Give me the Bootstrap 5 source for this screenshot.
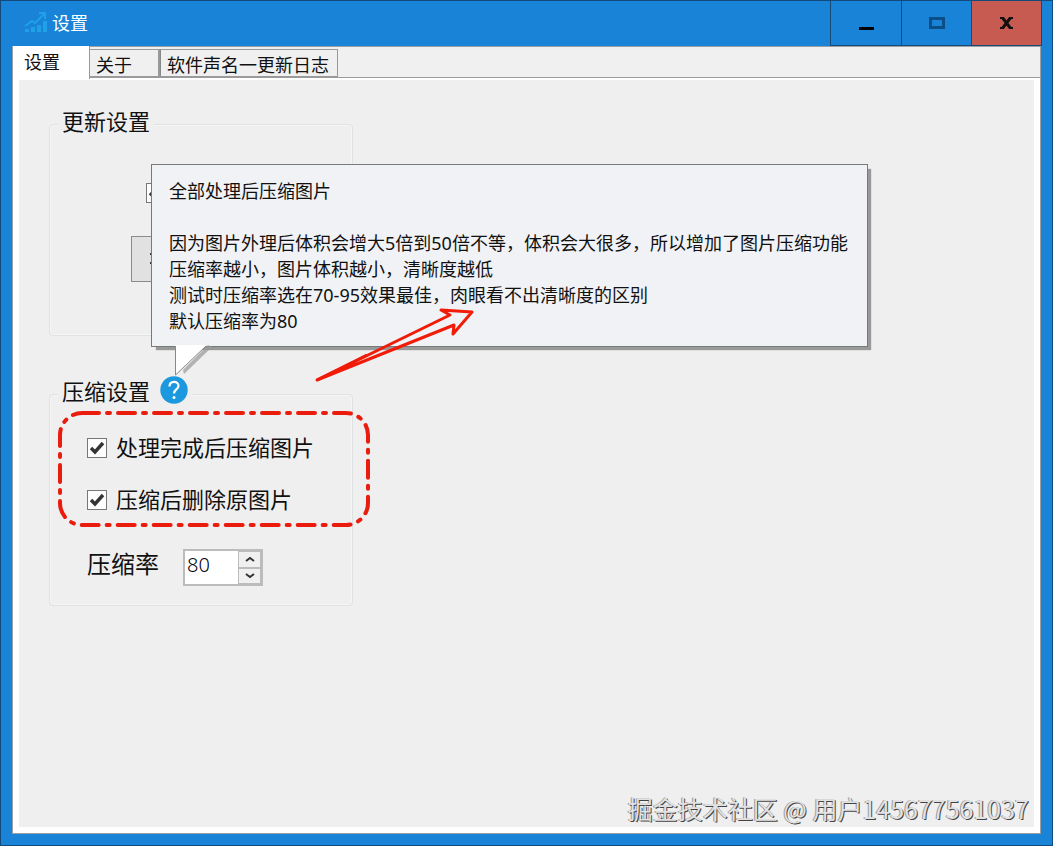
<!DOCTYPE html>
<html lang="zh-CN">
<head>
<meta charset="utf-8">
<meta name="viewport" content="width=device-width, initial-scale=1">
<title>设置</title>
<link rel="stylesheet" href="https://cdn.jsdelivr.net/npm/bootstrap@5.3.0/dist/css/bootstrap.min.css">
<style>
  body { font-family: "Noto Sans CJK SC", sans-serif; font-size: 18px; line-height: 26px; color: #111; }
  .app-window { background: #1883d7; border: 1px solid #124a7c; padding: 0 11px 11px; }
  .title-bar { height: 45px; margin-right: -1px; color: #fff; }
  .win-btn { width: 71px; border: 1px solid #174a75; border-top: 0; border-right: 0; background: #1883d7; }
  .win-btn.win-mid { width: 70px; }
  .win-btn.win-close { background: #c75b51; border-right: 1px solid #174a75; }
  .client { background: #f0f0f0; border: 1px solid #9a9fa3; }
  .tab-strip { height: 31px; border-bottom: 1px solid #9b9b9b; }
  .tab-item { height: 28px; padding: 1px 8px 1px 6px; color: #111; background: #f0f0f0; border: 1px solid #999; border-radius: 0; line-height: 26px; }
  .tab-item.middle { width: 70px; border-left: 0; border-right-width: 2px; }
  .tab-item.last { border-left-color: #888; }
  .tab-item.active { width: 77px; height: 33px; margin-bottom: -2px; padding: 0 11px 3px; background: #fff; border-width: 0 1px 0 0; z-index: 1; }
  .page { background: #efefef; border: 6px solid #fff; border-top-width: 2px; padding: 30px; }
  .group { width: 304px; height: 226px; border: 1px solid #dfe2e2; border-radius: 4px; box-shadow: inset 0 0 0 1px #f6f6f6; padding: 0 8px; margin-bottom: 44px; }
  .group legend { float: none; width: auto; font-size: 22px; line-height: 20px; padding: 0 4px 8px; margin: 0; background: #efefef; }
  .box { appearance: none; width: 20px; height: 20px; margin: 0; border: 1px solid #777; background: #fdfdfd; }
  .box:checked { background: #fdfdfd url("data:image/svg+xml,%3Csvg xmlns='http://www.w3.org/2000/svg' viewBox='0 0 18 18'%3E%3Cpath d='M3 9l4 4 8-9' fill='none' stroke='%23333' stroke-width='3.4'/%3E%3C/svg%3E") center/18px; }
  .update-body { padding: 45px 0 0 88px; }
  .update-btn { width: 140px; height: 46px; margin: 33px 0 0 -15px; padding: 0 17px; border: 1px solid #8b8b8b; background: #e1e1e1; }
  .options { padding: 26px 0 0 29px; font-size: 22px; line-height: 24px; }
  .option-list { gap: 22px; }
  .option { gap: 9px; padding-bottom: 6px; }
  .option .box { margin-top: 4px; }
  .marker { left: -29px; top: -23px; width: 312px; height: 116px; pointer-events: none; }
  .rate-row { margin-top: 33px; gap: 24px; }
  .rate-row label { font-size: 24px; padding-bottom: 10px; }
  .spin { width: 80px; height: 37px; border: 2px solid #bcbcbc; }
  .spin input { width: 53px; border: 0; padding: 0 0 6px 2px; font-family: "Noto Sans", "Noto Sans CJK SC", sans-serif; font-size: 20px; font-weight: 300; appearance: textfield; background: #fff; outline: 0; }
  .spin input::-webkit-inner-spin-button { appearance: none; }
  .spin-btn { border: 1px solid #bcbcbc; background: #f0f0f0; }
  .help { width: 28px; height: 28px; margin: -4px 0 -4px 10px; }
  .help-btn { border: 0; padding: 0; background: none; width: 28px; height: 28px; }
  .tip { left: -9px; bottom: 57px; width: max-content; padding: 13px 19px 12px 17px; border: 1px solid #767b78; background: #f0f2f6; box-shadow: 4px 4px 1px -1px #999; font-family: "Noto Sans", "Noto Sans CJK SC", sans-serif; font-size: 18px; line-height: 26px; z-index: 3; }
  .tip-tail { left: 22px; top: 100%; margin-top: -1px; }
  .tip-arrow { left: 160px; top: 100%; margin-top: -42px; }
  .credit { margin: 0 -25px -30px; font-size: 25px; line-height: 38px; color: #e2e2e2; text-shadow: 1px 1px 0 #444, -1px 0 0 #999; }
</style>
</head>
<body>
<main class="app-window min-vh-100 d-flex flex-column">
  <header class="title-bar d-flex align-items-stretch">
    <div class="d-flex align-items-center flex-grow-1 ps-2 gap-1 pb-1">
      <svg class="ms-1" width="24" height="22" viewBox="0 0 24 22" fill="none" stroke="#20a0e6" aria-hidden="true">
        <path d="M1 15l7-5 3 2 9-9M15 2h6v6" stroke-width="2"/>
        <path d="M3 21v-3M9 21v-5M15 21v-7M21 21V10" stroke-width="4"/>
      </svg>
      <span>设置</span>
    </div>
    <button class="win-btn" type="button" aria-label="最小化"><svg width="16" height="16" viewBox="0 0 16 16"><path d="M1 9h15v3H1z"/></svg></button>
    <button class="win-btn win-mid pb-2" type="button" aria-label="最大化"><svg width="16" height="12" viewBox="0 0 16 12"><path d="M1.500 1.500h13v9h-13z" fill="none" stroke="#0c4e86" stroke-width="3"/></svg></button>
    <button class="win-btn win-close pb-2" type="button" aria-label="关闭"><svg width="13" height="12" viewBox="0 0 13 12"><path d="M2 0l9 12M11 0L2 12" stroke="#111" stroke-width="3"/><path d="M0 1h4M9 1h4M0 11h4M9 11h4" stroke="#111" stroke-width="2"/></svg></button>
  </header>
  <section class="client flex-grow-1 d-flex flex-column">
    <nav class="tab-strip nav d-flex flex-nowrap align-items-end">
      <button type="button" class="tab-item active text-start position-relative">设置</button>
      <button type="button" class="tab-item middle text-start">关于</button>
      <button type="button" class="tab-item last">软件声名一更新日志</button>
    </nav>
    <div class="page flex-grow-1 d-flex flex-column">
      <fieldset class="group">
        <legend>更新设置</legend>
        <div class="update-body">
          <input class="box d-block" type="checkbox" aria-label="更新" checked>
          <button class="update-btn d-flex align-items-center" type="button" aria-label="更新"><svg width="6" height="14" viewBox="0 0 6 14"><path d="M1 2h5M1 11h5" stroke="#333" stroke-width="2"/></svg></button>
        </div>
      </fieldset>
      <fieldset class="group">
        <legend class="d-flex align-items-center">压缩设置
          <span class="help position-relative d-block">
            <button class="help-btn d-block" type="button" aria-label="帮助">
              <svg class="d-block" width="28" height="28" viewBox="0 0 28 28"><circle cx="14" cy="14" r="13.700" fill="#1b98de"/><path d="M9.500 10.500c0-6 9-6 9-.8 0 3.800-4.500 3.700-4.500 7.800" fill="none" stroke="#fff" stroke-width="2.200"/><circle cx="14" cy="21.500" r="1.500" fill="#fff"/></svg>
            </button>
            <span class="tip position-absolute" role="tooltip">全部处理后压缩图片<br><br>因为图片外理后体积会增大5倍到50倍不等，体积会大很多，所以增加了图片压缩功能<br>压缩率越小，图片体积越小，清晰度越低<br>测试时压缩率选在70-95效果最佳，肉眼看不出清晰度的区别<br>默认压缩率为80
              <svg class="tip-tail position-absolute" width="40" height="34" viewBox="0 0 40 34" aria-hidden="true">
                <path d="M10 29L38 2l-4-2L9 25z" fill="#999" opacity=".7"/>
                <path d="M1 0v30L33 0z" fill="#fff"/><path d="M1.500 1v29L32 1" fill="none" stroke="#888"/>
              </svg>
              <svg class="tip-arrow position-absolute" width="165" height="80" viewBox="0 0 165 80" fill="none" stroke="#f01c08" stroke-width="3" stroke-linejoin="round" aria-hidden="true">
                <path d="M5 76L138 11l-9-5 31 2-19 22 1-9z"/><path d="M5 76l50-25" stroke-width="3"/>
              </svg>
            </span>
          </span>
        </legend>
        <div class="options">
          <div class="option-list position-relative d-flex flex-column">
            <label class="option d-flex align-items-center"><input class="box" type="checkbox" checked>处理完成后压缩图片</label>
            <label class="option d-flex align-items-center"><input class="box" type="checkbox" checked>压缩后删除原图片</label>
            <svg class="marker position-absolute" viewBox="0 0 312 116" aria-hidden="true"><rect x="2" y="2" width="308" height="112" rx="22" fill="none" stroke="#e91c0d" stroke-width="4" stroke-linecap="round" stroke-dasharray="17 8 3 8"/></svg>
          </div>
          <div class="rate-row d-flex align-items-center">
            <label for="rate">压缩率</label>
            <div class="spin d-flex">
              <input id="rate" type="number" value="80" min="0" max="100">
              <div class="d-flex flex-column flex-grow-1">
                <button class="spin-btn flex-fill p-0 d-flex align-items-center justify-content-center" type="button" aria-label="增加"><svg width="10" height="6" viewBox="0 0 10 6"><path d="M1 5l4-3 4 3" fill="none" stroke="#333" stroke-width="2"/></svg></button>
                <button class="spin-btn flex-fill p-0 d-flex align-items-center justify-content-center" type="button" aria-label="减少"><svg width="10" height="6" viewBox="0 0 10 6"><path d="M1 1l4 3 4-3" fill="none" stroke="#333" stroke-width="2"/></svg></button>
              </div>
            </div>
          </div>
        </div>
      </fieldset>
      <footer class="credit mt-auto text-end">掘金技术社区 @ 用户145677561037</footer>
    </div>
  </section>
</main>
<script src="https://cdn.jsdelivr.net/npm/bootstrap@5.3.0/dist/js/bootstrap.bundle.min.js"></script>
</body>
</html>
